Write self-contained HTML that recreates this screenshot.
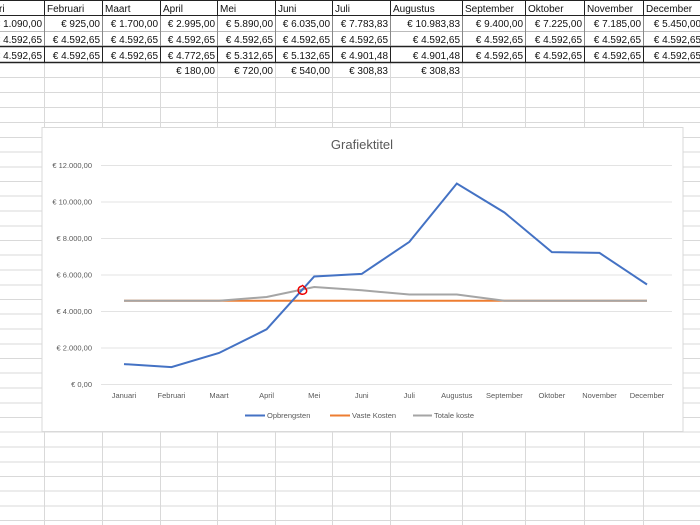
<!DOCTYPE html>
<html><head><meta charset="utf-8"><style>
html,body{margin:0;padding:0;background:#fff;width:700px;height:525px;overflow:hidden}
svg{display:block;font-family:"Liberation Sans",sans-serif}
.t{font-size:10px;fill:#111}
.r{text-anchor:end}
.ax{font-size:7.5px;fill:#595959}
</style></head><body>
<svg width="700" height="525" viewBox="0 0 700 525" xmlns="http://www.w3.org/2000/svg">
<!-- light grid -->
<g stroke="#d9d9d9" stroke-width="1">
<line x1="44.5" y1="0" x2="44.5" y2="525"/><line x1="102.5" y1="0" x2="102.5" y2="525"/><line x1="160.5" y1="0" x2="160.5" y2="525"/><line x1="217.5" y1="0" x2="217.5" y2="525"/><line x1="275.5" y1="0" x2="275.5" y2="525"/><line x1="332.5" y1="0" x2="332.5" y2="525"/><line x1="390.5" y1="0" x2="390.5" y2="525"/><line x1="462.5" y1="0" x2="462.5" y2="525"/><line x1="525.5" y1="0" x2="525.5" y2="525"/><line x1="584.5" y1="0" x2="584.5" y2="525"/><line x1="643.5" y1="0" x2="643.5" y2="525"/>
<line x1="0" y1="77.5" x2="700" y2="77.5"/><line x1="0" y1="92.5" x2="700" y2="92.5"/><line x1="0" y1="107.5" x2="700" y2="107.5"/><line x1="0" y1="122.5" x2="700" y2="122.5"/><line x1="0" y1="137.5" x2="700" y2="137.5"/><line x1="0" y1="152" x2="700" y2="152"/><line x1="0" y1="167" x2="700" y2="167"/><line x1="0" y1="181.5" x2="700" y2="181.5"/><line x1="0" y1="196" x2="700" y2="196"/><line x1="0" y1="211" x2="700" y2="211"/><line x1="0" y1="226" x2="700" y2="226"/><line x1="0" y1="240.5" x2="700" y2="240.5"/><line x1="0" y1="255" x2="700" y2="255"/><line x1="0" y1="270" x2="700" y2="270"/><line x1="0" y1="285" x2="700" y2="285"/><line x1="0" y1="299.5" x2="700" y2="299.5"/><line x1="0" y1="314" x2="700" y2="314"/><line x1="0" y1="329" x2="700" y2="329"/><line x1="0" y1="344" x2="700" y2="344"/><line x1="0" y1="358.5" x2="700" y2="358.5"/><line x1="0" y1="373" x2="700" y2="373"/><line x1="0" y1="388" x2="700" y2="388"/><line x1="0" y1="403" x2="700" y2="403"/><line x1="0" y1="417.5" x2="700" y2="417.5"/><line x1="0" y1="432" x2="700" y2="432"/><line x1="0" y1="447" x2="700" y2="447"/><line x1="0" y1="462" x2="700" y2="462"/><line x1="0" y1="476.5" x2="700" y2="476.5"/><line x1="0" y1="491" x2="700" y2="491"/><line x1="0" y1="506" x2="700" y2="506"/><line x1="0" y1="520.5" x2="700" y2="520.5"/>
<line x1="0" y1="31.5" x2="700" y2="31.5" stroke="#bbb"/>
</g>
<!-- dark borders -->
<g stroke="#222" stroke-width="1">
<line x1="0" y1="0.5" x2="700" y2="0.5"/><line x1="0" y1="15.5" x2="700" y2="15.5"/>
<line x1="0" y1="46.5" x2="700" y2="46.5" stroke-width="1.5"/><line x1="0" y1="62.5" x2="700" y2="62.5" stroke-width="1.5"/>
<g>
<line x1="44.5" y1="0" x2="44.5" y2="16"/><line x1="102.5" y1="0" x2="102.5" y2="16"/><line x1="160.5" y1="0" x2="160.5" y2="16"/><line x1="217.5" y1="0" x2="217.5" y2="16"/><line x1="275.5" y1="0" x2="275.5" y2="16"/><line x1="332.5" y1="0" x2="332.5" y2="16"/><line x1="390.5" y1="0" x2="390.5" y2="16"/><line x1="462.5" y1="0" x2="462.5" y2="16"/><line x1="525.5" y1="0" x2="525.5" y2="16"/><line x1="584.5" y1="0" x2="584.5" y2="16"/><line x1="643.5" y1="0" x2="643.5" y2="16"/>
<line x1="44.5" y1="46" x2="44.5" y2="63"/><line x1="102.5" y1="46" x2="102.5" y2="63"/><line x1="160.5" y1="46" x2="160.5" y2="63"/><line x1="217.5" y1="46" x2="217.5" y2="63"/><line x1="275.5" y1="46" x2="275.5" y2="63"/><line x1="332.5" y1="46" x2="332.5" y2="63"/><line x1="390.5" y1="46" x2="390.5" y2="63"/><line x1="462.5" y1="46" x2="462.5" y2="63"/><line x1="525.5" y1="46" x2="525.5" y2="63"/><line x1="584.5" y1="46" x2="584.5" y2="63"/><line x1="643.5" y1="46" x2="643.5" y2="63"/>
</g>
<g stroke="#888"><line x1="44.5" y1="16" x2="44.5" y2="46"/><line x1="102.5" y1="16" x2="102.5" y2="46"/><line x1="160.5" y1="16" x2="160.5" y2="46"/><line x1="217.5" y1="16" x2="217.5" y2="46"/><line x1="275.5" y1="16" x2="275.5" y2="46"/><line x1="332.5" y1="16" x2="332.5" y2="46"/><line x1="390.5" y1="16" x2="390.5" y2="46"/><line x1="462.5" y1="16" x2="462.5" y2="46"/><line x1="525.5" y1="16" x2="525.5" y2="46"/><line x1="584.5" y1="16" x2="584.5" y2="46"/><line x1="643.5" y1="16" x2="643.5" y2="46"/></g>
</g>
<!-- header -->
<g class="t">
<text x="-1" y="12">ri</text><text x="47" y="12">Februari</text><text x="105" y="12">Maart</text><text x="163" y="12">April</text><text x="220" y="12">Mei</text><text x="278" y="12">Juni</text><text x="335" y="12">Juli</text><text x="393" y="12">Augustus</text><text x="465" y="12">September</text><text x="528" y="12">Oktober</text><text x="587" y="12">November</text><text x="646" y="12">December</text>
</g>
<g class="t r">
<text x="42" y="27">€ 1.090,00</text><text x="100" y="27">€ 925,00</text><text x="158" y="27">€ 1.700,00</text><text x="215" y="27">€ 2.995,00</text><text x="273" y="27">€ 5.890,00</text><text x="330" y="27">€ 6.035,00</text><text x="388" y="27">€ 7.783,83</text><text x="460" y="27">€ 10.983,83</text><text x="523" y="27">€ 9.400,00</text><text x="582" y="27">€ 7.225,00</text><text x="641" y="27">€ 7.185,00</text><text x="701" y="27">€ 5.450,00</text>
<text x="42" y="43">€ 4.592,65</text><text x="100" y="43">€ 4.592,65</text><text x="158" y="43">€ 4.592,65</text><text x="215" y="43">€ 4.592,65</text><text x="273" y="43">€ 4.592,65</text><text x="330" y="43">€ 4.592,65</text><text x="388" y="43">€ 4.592,65</text><text x="460" y="43">€ 4.592,65</text><text x="523" y="43">€ 4.592,65</text><text x="582" y="43">€ 4.592,65</text><text x="641" y="43">€ 4.592,65</text><text x="701" y="43">€ 4.592,65</text>
<text x="42" y="59">€ 4.592,65</text><text x="100" y="59">€ 4.592,65</text><text x="158" y="59">€ 4.592,65</text><text x="215" y="59">€ 4.772,65</text><text x="273" y="59">€ 5.312,65</text><text x="330" y="59">€ 5.132,65</text><text x="388" y="59">€ 4.901,48</text><text x="460" y="59">€ 4.901,48</text><text x="523" y="59">€ 4.592,65</text><text x="582" y="59">€ 4.592,65</text><text x="641" y="59">€ 4.592,65</text><text x="701" y="59">€ 4.592,65</text>
<text x="215" y="74">€ 180,00</text><text x="273" y="74">€ 720,00</text><text x="330" y="74">€ 540,00</text><text x="388" y="74">€ 308,83</text><text x="460" y="74">€ 308,83</text>
</g>
<!-- chart -->
<rect x="42" y="127.5" width="641" height="304" fill="#fff" stroke="#d9d9d9"/>
<text x="362" y="149" text-anchor="middle" font-size="13" fill="#595959">Grafiektitel</text>
<g stroke="#e3e3e3" stroke-width="1">
<line x1="101" y1="165.5" x2="672" y2="165.5"/><line x1="101" y1="202" x2="672" y2="202"/><line x1="101" y1="238.5" x2="672" y2="238.5"/><line x1="101" y1="275" x2="672" y2="275"/><line x1="101" y1="311.5" x2="672" y2="311.5"/><line x1="101" y1="348" x2="672" y2="348"/><line x1="101" y1="384.5" x2="672" y2="384.5"/>
</g>
<g class="ax r">
<text x="92" y="168">€ 12.000,00</text><text x="92" y="204.5">€ 10.000,00</text><text x="92" y="241">€ 8.000,00</text><text x="92" y="277.5">€ 6.000,00</text><text x="92" y="314">€ 4.000,00</text><text x="92" y="350.5">€ 2.000,00</text><text x="92" y="387">€ 0,00</text>
</g>
<g class="ax" text-anchor="middle">
<text x="124" y="398">Januari</text><text x="171.5" y="398">Februari</text><text x="219" y="398">Maart</text><text x="266.6" y="398">April</text><text x="314.2" y="398">Mei</text><text x="361.7" y="398">Juni</text><text x="409.3" y="398">Juli</text><text x="456.8" y="398">Augustus</text><text x="504.4" y="398">September</text><text x="551.9" y="398">Oktober</text><text x="599.5" y="398">November</text><text x="647" y="398">December</text>
</g>
<polyline fill="none" stroke="#ed7d31" stroke-width="2" points="124,300.7 647,300.7"/>
<polyline fill="none" stroke="#a5a5a5" stroke-width="2" points="124,300.7 171.5,300.7 219,300.7 266.6,297 314.2,287 361.7,290.3 409.3,294.5 456.8,294.5 504.4,300.7 551.9,300.7 599.5,300.7 647,300.7"/>
<polyline fill="none" stroke="#4472c4" stroke-width="2" points="124,364.1 171.5,367.1 219,353 266.6,329.3 314.2,276.5 361.7,273.9 409.3,241.9 456.8,183.5 504.4,212.5 551.9,252.1 599.5,252.9 647,284.5"/>
<path d="M302,286 C297,287 297,293 301,294 C305,295 308,292 306,289 C305,287 303,286 302,285" fill="none" stroke="#e00" stroke-width="1.5"/>
<g class="ax">
<line x1="245" y1="415.5" x2="265" y2="415.5" stroke="#4472c4" stroke-width="2"/><text x="267" y="418">Opbrengsten</text>
<line x1="330" y1="415.5" x2="350" y2="415.5" stroke="#ed7d31" stroke-width="2"/><text x="352" y="418">Vaste Kosten</text>
<line x1="413" y1="415.5" x2="432" y2="415.5" stroke="#a5a5a5" stroke-width="2"/><text x="434" y="418">Totale koste</text>
</g>
</svg>
</body></html>
